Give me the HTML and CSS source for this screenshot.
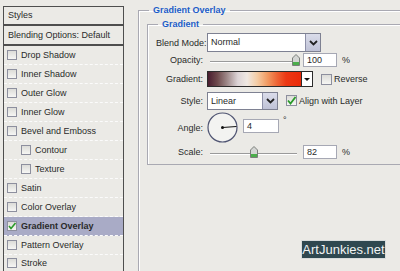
FILE: index.html
```html
<!DOCTYPE html>
<html lang="en">
<head>
    <meta charset="UTF-8">
    <title>Layer Style - Gradient Overlay</title>
    <link rel="stylesheet" href="styles.css">
</head>
<body>
    <div class="dialog">
        <!-- Left list of layer effects -->
        <div class="styles-list">
            <div class="list-head">Styles</div>
            <div class="list-head">Blending Options: Default</div>
            <div class="item"><span class="box"></span>Drop Shadow</div>
            <div class="item"><span class="box"></span>Inner Shadow</div>
            <div class="item"><span class="box"></span>Outer Glow</div>
            <div class="item"><span class="box"></span>Inner Glow</div>
            <div class="item"><span class="box"></span>Bevel and Emboss</div>
            <div class="item sub"><span class="box"></span>Contour</div>
            <div class="item sub"><span class="box"></span>Texture</div>
            <div class="item"><span class="box"></span>Satin</div>
            <div class="item"><span class="box"></span>Color Overlay</div>
            <div class="item active"><span class="box checked"><svg width="10" height="10" viewBox="0 0 10 10"><path d="M2 5 L4 7.5 L8.5 2" fill="none" stroke="#2a9a2a" stroke-width="1.6"/></svg></span>Gradient Overlay</div>
            <div class="item"><span class="box"></span>Pattern Overlay</div>
            <div class="item"><span class="box"></span>Stroke</div>
        </div>

        <!-- Settings panel -->
        <div class="settings">
            <fieldset class="group outer">
                <legend>Gradient Overlay</legend>
                <fieldset class="group inner">
                    <legend>Gradient</legend>
                    <div class="form">
                        <div class="label">Blend Mode:</div>
                        <div class="ctrl">
                            <div class="select wide"><span class="value">Normal</span><span class="drop"><svg width="9" height="6" viewBox="0 0 9 6"><path d="M1 1 L4.5 4.5 L8 1" fill="none" stroke="#222" stroke-width="1.8"/></svg></span></div>
                        </div>

                        <div class="label">Opacity:</div>
                        <div class="ctrl">
                            <div class="slider">
                                <div class="track"></div>
                                <svg class="thumb" style="left: 85px" width="8" height="12" viewBox="0 0 8 12"><path d="M0.5 4 L4 0.5 L7.5 4 L7.5 11.5 L0.5 11.5 Z" fill="#d4d6d4" stroke="#7a7f7a"/><rect x="1" y="8" width="6" height="3" fill="#4cae4c"/></svg>
                            </div>
                            <div class="num">100</div><span class="unit">%</span>
                        </div>

                        <div class="label">Gradient:</div>
                        <div class="ctrl">
                            <div class="gradient"><span class="ramp"></span><span class="arrow"></span></div>
                            <span class="box big"></span><span class="check-text">Reverse</span>
                        </div>

                        <div class="label">Style:</div>
                        <div class="ctrl">
                            <div class="select short"><span class="value">Linear</span><span class="drop"><svg width="9" height="6" viewBox="0 0 9 6"><path d="M1 1 L4.5 4.5 L8 1" fill="none" stroke="#222" stroke-width="1.8"/></svg></span></div>
                            <span class="box big checked"><svg width="11" height="11" viewBox="0 0 11 11"><path d="M2 5.5 L4.5 8.5 L9.5 2" fill="none" stroke="#2a9a2a" stroke-width="1.8"/></svg></span><span class="check-text">Align with Layer</span>
                        </div>

                        <div class="label">Angle:</div>
                        <div class="ctrl top">
                            <svg class="dial" width="31" height="31" viewBox="0 0 31 31"><circle cx="15.5" cy="15.5" r="14.5" fill="#f3f3f1" stroke="#4f5472" stroke-width="1.2"/><path d="M15.5 15.5 L29.5 14.5" stroke="#111" stroke-width="1"/><circle cx="15.5" cy="15.5" r="1.5" fill="#111"/></svg>
                            <div class="num angle">4</div><span class="unit deg">°</span>
                        </div>

                        <div class="label">Scale:</div>
                        <div class="ctrl">
                            <div class="slider">
                                <div class="track"></div>
                                <svg class="thumb" style="left: 43px" width="8" height="12" viewBox="0 0 8 12"><path d="M0.5 4 L4 0.5 L7.5 4 L7.5 11.5 L0.5 11.5 Z" fill="#d4d6d4" stroke="#7a7f7a"/><rect x="1" y="8" width="6" height="3" fill="#4cae4c"/></svg>
                            </div>
                            <div class="num">82</div><span class="unit">%</span>
                        </div>
                    </div>
                </fieldset>
            </fieldset>
        </div>
    </div>

    <div class="watermark">ArtJunkies.net</div>
</body>
</html>
```

FILE: styles.css
```css
/* Page and dialog base */
body {
    margin: 0;
    width: 400px;
    height: 271px;
    overflow: hidden;
    position: relative;
    background-color: #ebeae6;
    font-family: "Liberation Sans", Arial, sans-serif;
    font-size: 9px;
    color: #2a2a2a;
}

.dialog {
    display: flex;
    align-items: flex-start;
    padding-left: 3px;
}

/* Left styles list */
.styles-list {
    width: 119px;
    margin-top: 6px;
    border: 1px solid #4e4e4e;
    border-bottom: none;
    flex-shrink: 0;
}

.list-head {
    height: 18px;
    line-height: 18px;
    padding-left: 4px;
    border-bottom: 2px solid #4e4e4e;
}

.list-head:first-child {
    height: 17px;
    line-height: 17px;
}

.item {
    display: flex;
    align-items: center;
    height: 18px;
    padding-left: 3px;
    border-bottom: 1px dashed #fbfbfb;
}

.item:last-child {
    height: 16px;
    border-bottom: none;
}

.item.sub {
    padding-left: 17px;
}

.item.active {
    background-color: #a9abc6;
    font-weight: bold;
}

/* Checkboxes */
.box {
    display: inline-block;
    width: 8px;
    height: 8px;
    margin-right: 4px;
    border: 1px solid #8d8f9e;
    background: linear-gradient(#dcdcd8, #f6f6f4);
    flex-shrink: 0;
    position: relative;
}

.box svg {
    position: absolute;
    left: -1px;
    top: -1px;
}

.box.big {
    width: 9px;
    height: 9px;
    margin-right: 2px;
}

/* Group boxes */
.settings {
    margin-left: 14px;
    margin-top: 4px;
}

.group {
    margin: 0;
    box-sizing: border-box;
    border: 1px solid #a9a9b2;
    border-right: none;
    box-shadow: inset 1px 1px 0 #fff;
}

.group legend {
    margin-left: 2px;
    padding: 0 4px;
    line-height: 12px;
    color: #1b5cc8;
    font-weight: bold;
}

.outer {
    width: 262px;
    height: 267px;
    border-bottom: none;
    padding: 2px 0 0 8px;
}

.inner {
    width: 253px;
    padding: 0 0 0 8px;
}

/* Form grid */
.form {
    display: grid;
    grid-template-columns: 47px auto;
    grid-template-rows: 19px 16px 22px 21px 34px 14px;
    column-gap: 4px;
    padding: 3px 0 5px;
}

.label {
    text-align: right;
    align-self: center;
    white-space: nowrap;
}

.ctrl {
    display: flex;
    align-items: center;
}

.ctrl.top {
    align-items: flex-start;
    padding-top: 2px;
}

/* Dropdowns */
.select {
    display: flex;
    border: 1px solid #7e8192;
    background-color: #fff;
    box-sizing: border-box;
}

.select.wide {
    width: 114px;
    height: 19px;
}

.select.short {
    width: 71px;
    height: 18px;
    margin-right: 8px;
}

.select .value {
    flex: 1;
    padding-left: 3px;
    line-height: 17px;
}

.select .drop {
    width: 14px;
    display: flex;
    align-items: center;
    justify-content: center;
    background: linear-gradient(#dadcea, #bfc2d6);
    border-left: 1px solid #8d90a8;
}

/* Sliders and number fields */
.slider {
    position: relative;
    width: 96px;
    height: 12px;
}

.track {
    position: absolute;
    left: 3px;
    right: 6px;
    top: 7px;
    height: 1px;
    background-color: #9a9a9a;
    border-bottom: 1px solid #fff;
}

.thumb {
    position: absolute;
    top: 0;
}

.num {
    width: 29px;
    height: 12px;
    line-height: 12px;
    padding-left: 3px;
    border: 1px solid #a6a8b4;
    background-color: #fff;
}

.num.angle {
    width: 31px;
    margin-left: 5px;
    margin-top: 6px;
}

.unit {
    margin-left: 5px;
}

.unit.deg {
    margin-left: 4px;
    margin-top: 2px;
}

/* Gradient preview */
.gradient {
    display: flex;
    width: 106px;
    height: 16px;
    border: 1px solid #2b2b2b;
    box-sizing: border-box;
    margin-right: 8px;
}

.ramp {
    flex: 1;
    background: linear-gradient(to right, #4a1e30 0%, #6e4a4c 10%, #9c8686 20%, #dcd4d6 32%, #efe8e2 42%, #f4cca4 53%, #f19a62 64%, #ee6636 74%, #ec3814 84%, #ea2a0a 100%);
}

.arrow {
    width: 10px;
    background-color: #fff;
    border-left: 1px solid #2b2b2b;
    position: relative;
}

.arrow::after {
    content: "";
    position: absolute;
    left: 2px;
    top: 6px;
    border-left: 3px solid transparent;
    border-right: 3px solid transparent;
    border-top: 3px solid #111;
}

.dial {
    display: block;
    margin-top: -1px;
}

/* Watermark sits over the dialog */
.watermark {
    position: absolute;
    left: 301px;
    top: 240px;
    width: 83px;
    height: 17px;
    line-height: 17px;
    text-align: center;
    background-color: #2f4850;
    border: 1px solid #d8dcdc;
    color: #f2f4f4;
    font-size: 13px;
}
```
